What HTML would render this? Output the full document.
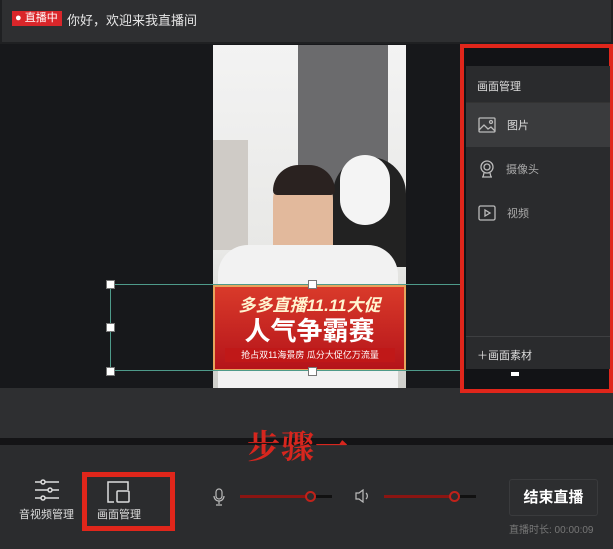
<!DOCTYPE html>
<html><head><meta charset="utf-8"><style>
*{margin:0;padding:0;box-sizing:border-box}
body{width:613px;height:549px;overflow:hidden;background:#17181b;font-family:"Liberation Sans","Noto Sans CJK SC",sans-serif;position:relative}
.abs{position:absolute}
.h{position:absolute;width:9px;height:9px;background:#fff;border:1px solid #777}
</style></head><body>
<div class="abs" style="left:0;top:0;width:613px;height:44px;background:#2e2f31;border:2px solid #1f2022;border-top:none"></div>
<div class="abs" style="left:12px;top:11px;width:50px;height:15px;background:#d9262a;color:#fff;font-size:11px;line-height:15px;padding-left:3px">● 直播中</div>
<div class="abs" style="left:67px;top:10px;color:#e6e6e6;font-size:13px">你好，欢迎来我直播间</div>
<div class="abs" style="left:213px;top:45px;width:193px;height:343px;background:linear-gradient(#f3f3f3,#e8e8e6 60%,#cfcfcb);overflow:hidden">
 <div class="abs" style="left:85px;top:0;width:90px;height:190px;background:#6b6b6d"></div>
 <div class="abs" style="left:0;top:95px;width:35px;height:110px;background:#cfcbc6"></div>
 <div class="abs" style="left:120px;top:112px;width:73px;height:110px;background:#222;border-radius:40px 40px 0 0"></div>
 <div class="abs" style="left:127px;top:110px;width:50px;height:70px;background:#f4f4f4;border-radius:25px"></div>
 <div class="abs" style="left:60px;top:125px;width:60px;height:110px;background:#e2b99c;border-radius:30px 30px 10px 10px"></div>
 <div class="abs" style="left:60px;top:120px;width:62px;height:30px;background:#2a2220;border-radius:30px 30px 5px 5px"></div>
 <div class="abs" style="left:5px;top:200px;width:180px;height:143px;background:#f2f2f2;border-radius:30px 30px 0 0"></div>
 <div class="abs" style="left:0;top:240px;width:193px;height:86px;background:linear-gradient(#d93a2a,#b5141a);border:2px solid #e7a45c"></div>
 <div class="abs" style="left:0;top:246px;width:193px;text-align:center;color:#fff4d0;font-weight:bold;font-size:17px;font-style:italic">多多直播11.11大促</div>
 <div class="abs" style="left:0;top:266px;width:193px;text-align:center;color:#fff;font-weight:bold;font-size:26px">人气争霸赛</div>
 <div class="abs" style="left:12px;top:303px;width:170px;height:14px;background:#c01818;text-align:center;color:#fff;font-size:9px;line-height:14px">抢占双11海景房 瓜分大促亿万流量</div>
</div>
<div class="abs" style="left:110px;top:284px;width:360px;height:87px;border:1px solid #4e9a8a;border-right:none"></div>
<div class="h" style="left:106px;top:280px"></div><div class="h" style="left:106px;top:323px"></div><div class="h" style="left:106px;top:367px"></div>
<div class="h" style="left:308px;top:280px"></div><div class="h" style="left:308px;top:367px"></div>
<div class="abs" style="left:0;top:388px;width:613px;height:50px;background:#2e2f31"></div>
<div class="abs" style="left:0;top:438px;width:613px;height:7px;background:#141416"></div>
<div class="abs" style="left:0;top:445px;width:613px;height:104px;background:#2b2c2e"></div>
<div class="abs" style="left:460px;top:44px;width:153px;height:349px;border:4px solid #e0261b;background:#121316"></div>
<div class="abs" style="left:466px;top:66px;width:144px;height:303px;background:#2a2b2d">
 <div style="height:37px;padding:12px 0 0 11px;color:#ddd;font-size:11px;border-bottom:1px solid #333">画面管理</div>
 <div style="height:44px;background:#3a3b3d;display:flex;align-items:center;padding-left:12px;color:#ddd;font-size:11px">
  <svg width="18" height="16" viewBox="0 0 18 16" fill="none" stroke="#bbb" stroke-width="1.3"><rect x="1" y="1" width="16" height="14" rx="1"/><path d="M1 13l5-5 4 4 3-2 4 4"/><circle cx="13" cy="5" r="1.5"/></svg>
  <span style="margin-left:11px">图片</span></div>
 <div style="height:44px;display:flex;align-items:center;padding-left:13px;color:#aaa;font-size:11px">
  <svg width="16" height="18" viewBox="0 0 16 18" fill="none" stroke="#bbb" stroke-width="1.3"><circle cx="8" cy="7" r="6"/><circle cx="8" cy="7" r="3"/><path d="M3 17h10M5 13l-1 4M11 13l1 4"/></svg>
  <span style="margin-left:11px">摄像头</span></div>
 <div style="height:44px;display:flex;align-items:center;padding-left:12px;color:#aaa;font-size:11px">
  <svg width="18" height="16" viewBox="0 0 18 16" fill="none" stroke="#bbb" stroke-width="1.3"><rect x="1" y="1" width="16" height="14" rx="1.5"/><path d="M7 5v6l5-3z"/></svg>
  <span style="margin-left:11px">视频</span></div>
 <div class="abs" style="left:0;top:270px;width:144px;border-top:1px solid #3e3f41;padding:10px 0 0 11px;color:#ddd;font-size:11px">＋画面素材</div>
</div>
<div class="abs" style="left:511px;top:372px;width:8px;height:4px;background:#fff"></div>
<div class="abs" style="left:247px;top:421px;color:#d7261e;font-size:33px;font-family:'Noto Serif CJK SC',serif;font-weight:bold;letter-spacing:1px">步骤一</div>
<svg class="abs" style="left:34px;top:479px" width="26" height="22" viewBox="0 0 26 22" fill="none" stroke="#ddd" stroke-width="1.5"><path d="M1 3h24M1 11h24M1 19h24"/><circle cx="9" cy="3" r="2" fill="#2b2c2e"/><circle cx="16" cy="11" r="2" fill="#2b2c2e"/><circle cx="9" cy="19" r="2" fill="#2b2c2e"/></svg>
<div class="abs" style="left:19px;top:506px;color:#ddd;font-size:11px">音视频管理</div>
<div class="abs" style="left:82px;top:472px;width:93px;height:59px;border:5px solid #e0261b"></div>
<svg class="abs" style="left:106px;top:480px" width="26" height="24" viewBox="0 0 26 24" fill="none" stroke="#ddd" stroke-width="1.5"><path d="M8 22H2V2h20v8"/><rect x="11" y="11" width="12" height="11" rx="1"/></svg>
<div class="abs" style="left:97px;top:506px;color:#ddd;font-size:11px">画面管理</div>
<svg class="abs" style="left:213px;top:488px" width="12" height="18" viewBox="0 0 12 18" fill="none" stroke="#bbb" stroke-width="1.2"><rect x="3" y="1" width="6" height="10" rx="3"/><path d="M1 8a5 5 0 0 0 10 0M6 13v3M3 17h6"/></svg>
<div class="abs" style="left:240px;top:495px;width:72px;height:3px;background:#8b1512"></div>
<div class="abs" style="left:312px;top:495px;width:20px;height:3px;background:#111"></div>
<div class="abs" style="left:305px;top:491px;width:11px;height:11px;border:2px solid #c0221a;border-radius:50%;background:#2b2c2e"></div>
<svg class="abs" style="left:355px;top:489px" width="16" height="14" viewBox="0 0 16 14" fill="none" stroke="#bbb" stroke-width="1.2"><path d="M1 4h3l4-3v12l-4-3H1zM11 4a4 4 0 0 1 0 6"/></svg>
<div class="abs" style="left:384px;top:495px;width:72px;height:3px;background:#8b1512"></div>
<div class="abs" style="left:456px;top:495px;width:20px;height:3px;background:#111"></div>
<div class="abs" style="left:449px;top:491px;width:11px;height:11px;border:2px solid #c0221a;border-radius:50%;background:#2b2c2e"></div>
<div class="abs" style="left:509px;top:479px;width:89px;height:37px;border:1px solid #3a3b3d;border-radius:3px;background:#2d2e30;color:#fff;font-size:15px;text-align:center;line-height:35px;font-weight:bold">结束直播</div>
<div class="abs" style="left:509px;top:521px;color:#777;font-size:10px">直播时长: 00:00:09</div>
</body></html>
